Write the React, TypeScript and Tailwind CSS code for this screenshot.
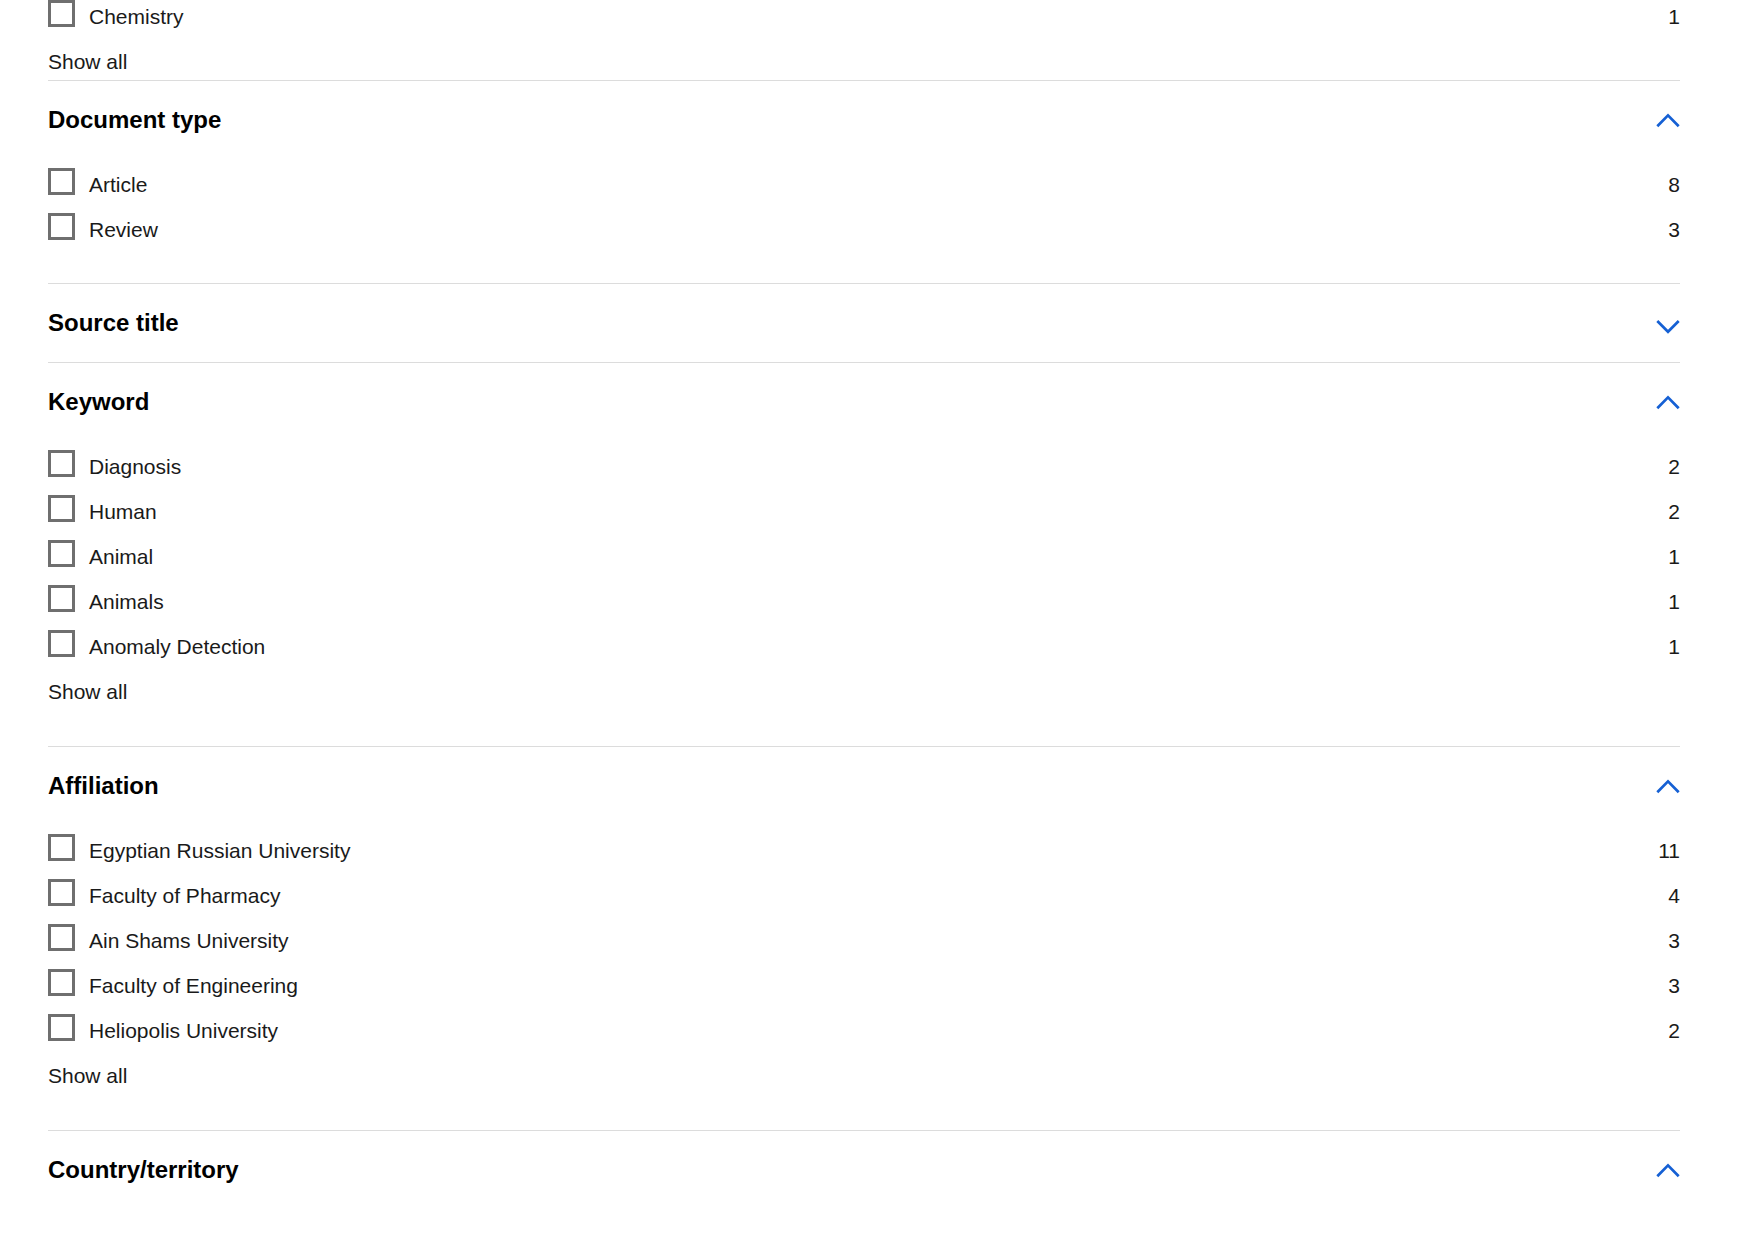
import React from 'react';

type Item = { label: string; count: number };

type Section = {
  title: string;
  open: boolean;
  items: Item[];
  showAll?: boolean;
};

const sections: Section[] = [
  {
    title: 'Document type',
    open: true,
    items: [
      { label: 'Article', count: 8 },
      { label: 'Review', count: 3 },
    ],
  },
  { title: 'Source title', open: false, items: [] },
  {
    title: 'Keyword',
    open: true,
    showAll: true,
    items: [
      { label: 'Diagnosis', count: 2 },
      { label: 'Human', count: 2 },
      { label: 'Animal', count: 1 },
      { label: 'Animals', count: 1 },
      { label: 'Anomaly Detection', count: 1 },
    ],
  },
  {
    title: 'Affiliation',
    open: true,
    showAll: true,
    items: [
      { label: 'Egyptian Russian University', count: 11 },
      { label: 'Faculty of Pharmacy', count: 4 },
      { label: 'Ain Shams University', count: 3 },
      { label: 'Faculty of Engineering', count: 3 },
      { label: 'Heliopolis University', count: 2 },
    ],
  },
  { title: 'Country/territory', open: true, items: [] },
];

const Chevron: React.FC<{ up: boolean }> = ({ up }) => (
  <svg width="24" height="24" viewBox="0 0 24 24" fill="none" className="shrink-0">
    <path
      d={up ? 'M1.3 18.3 L12 7.4 L22.7 18.3' : 'M1.3 10 L12 20.8 L22.7 10'}
      stroke="#1560d4"
      strokeWidth="2.7"
    />
  </svg>
);

const Row: React.FC<{ item: Item }> = ({ item }) => (
  <div className="flex items-start h-[45px]">
    <span className="w-[27px] h-[27px] border-[3px] border-[#6f6f6f] bg-white shrink-0" />
    <span className="ml-[14px] mt-[3px] leading-[27px] flex-1">{item.label}</span>
    <span className="mt-[3px] leading-[27px]">{item.count}</span>
  </div>
);

const ShowAll: React.FC<{ className?: string }> = ({ className }) => (
  <div className={`pt-[3px] leading-[27px] ${className ?? 'h-[45px]'}`}>Show all</div>
);

const App: React.FC = () => {
  return (
    <div
      className="bg-white min-h-[1239px] pl-[48px] w-[1680px] text-[21px] text-[#1a1a1a] overflow-hidden"
      style={{ fontFamily: '"Liberation Sans", Arial, sans-serif' }}
    >
      {/* tail of the previous facet */}
      <div className="h-[80px]">
        <Row item={{ label: 'Chemistry', count: 1 }} />
        <ShowAll className="h-[35px]" />
      </div>

      {sections.map((section, i) => (
        <div
          key={i}
          className={`border-t border-[#dcdcdc] pt-[25px] ${section.showAll ? 'pb-[26px]' : 'pb-[25px]'}`}
        >
          <div className="flex items-center justify-between h-[28px]">
            <h3 className="text-[24px] font-bold leading-[28px] text-black">{section.title}</h3>
            <Chevron up={section.open} />
          </div>
          {section.items.length > 0 && (
            <div className="mt-[34px]">
              {section.items.map((item, j) => (
                <Row key={j} item={item} />
              ))}
              {section.showAll && <ShowAll />}
            </div>
          )}
        </div>
      ))}
    </div>
  );
};

export default App;
